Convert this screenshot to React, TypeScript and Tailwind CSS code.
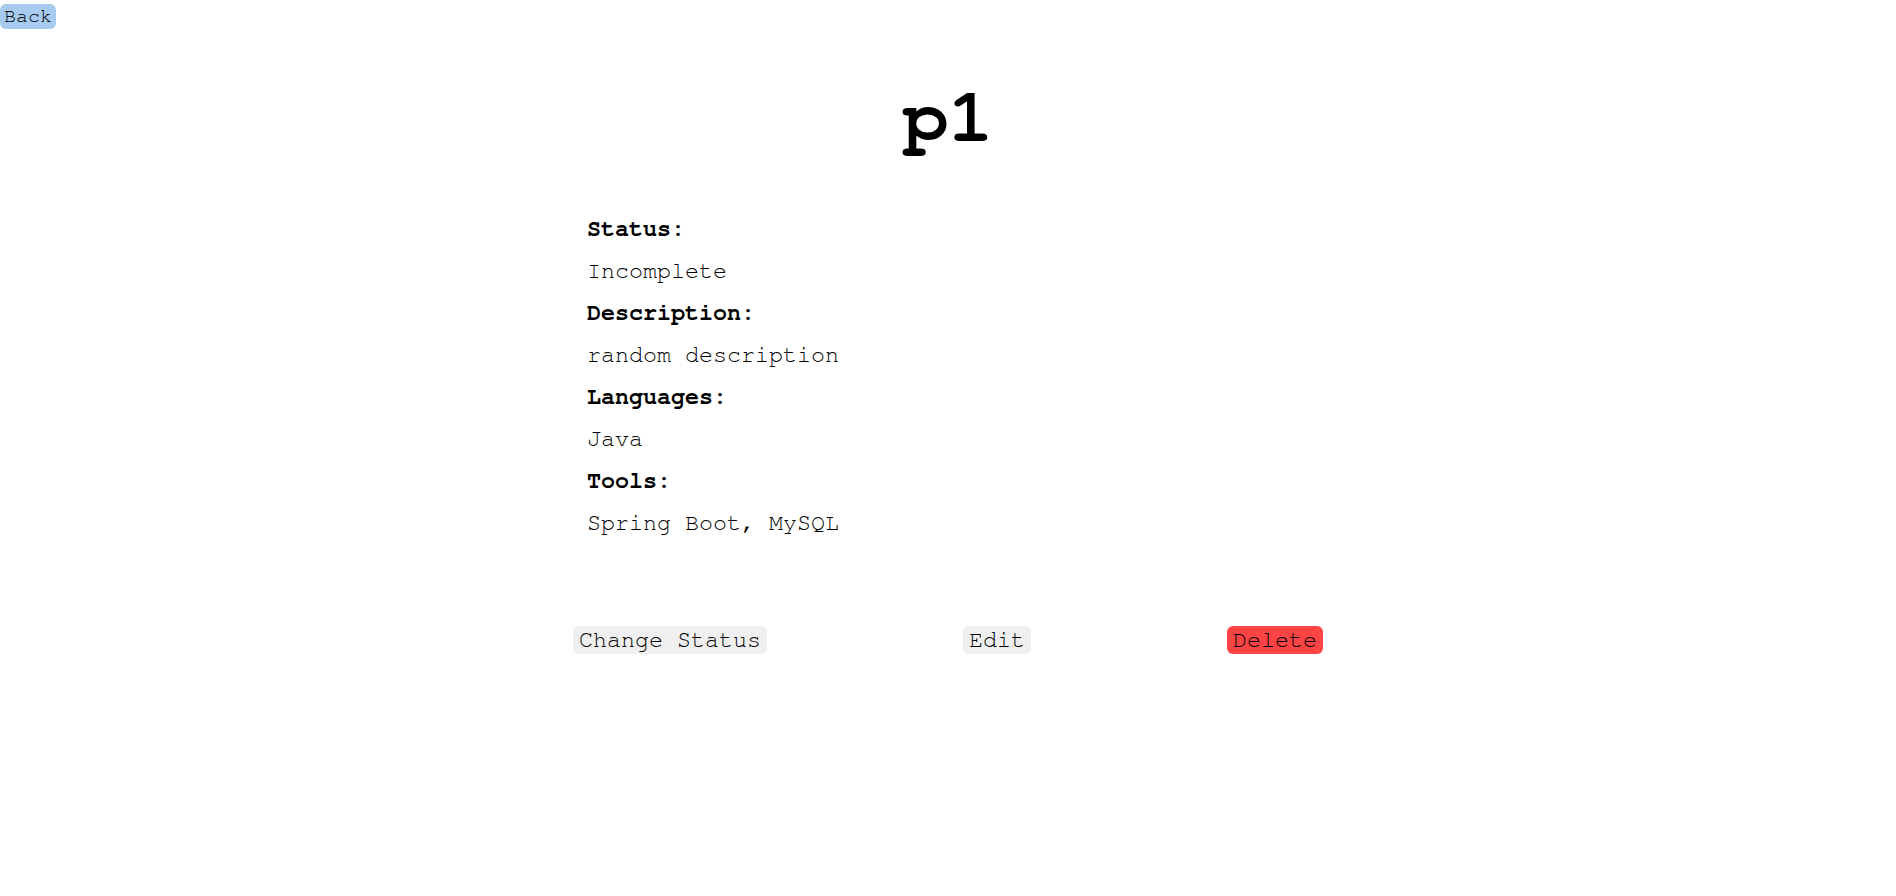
const project = {
  name: "p1",
  status: "Incomplete",
  description: "random description",
  languages: ["Java"],
  tools: ["Spring Boot", "MySQL"],
};

function Field({ label, value }: { label: string; value: string }) {
  return (
    <>
      <div className="h-[42px] leading-[42px] font-bold text-black">{label}</div>
      <div className="h-[42px] leading-[42px] text-black">{value}</div>
    </>
  );
}

export default function App() {
  return (
    <div className="min-h-screen bg-white text-black font-['Nimbus_Mono_PS','FreeMono','Courier_New','Liberation_Mono',monospace]">
      <div className="pt-[4px]">
        <button className="h-[25px] px-[4px] rounded-md bg-[#a7cbee] text-[20px] leading-[25px] text-black">
          Back
        </button>
      </div>
      <h1 className="mt-[48px] text-center text-[76px] leading-[82px] font-bold">{project.name}</h1>
      <div className="mx-auto mt-[49px] w-[750px]">
        <div className="pl-[14px] text-[23.33px]">
          <Field label="Status:" value={project.status} />
          <Field label="Description:" value={project.description} />
          <Field label="Languages:" value={project.languages.join(", ")} />
          <Field label="Tools:" value={project.tools.join(", ")} />
        </div>
        <div className="mt-[82px] flex justify-between text-[23.33px]">
          <button className="h-[28px] px-[6px] rounded-md bg-[#efefef] leading-[28px]">Change Status</button>
          <button className="h-[28px] px-[6px] rounded-md bg-[#efefef] leading-[28px]">Edit</button>
          <button className="h-[28px] px-[6px] rounded-md bg-[#fd4444] leading-[28px]">Delete</button>
        </div>
      </div>
    </div>
  );
}
